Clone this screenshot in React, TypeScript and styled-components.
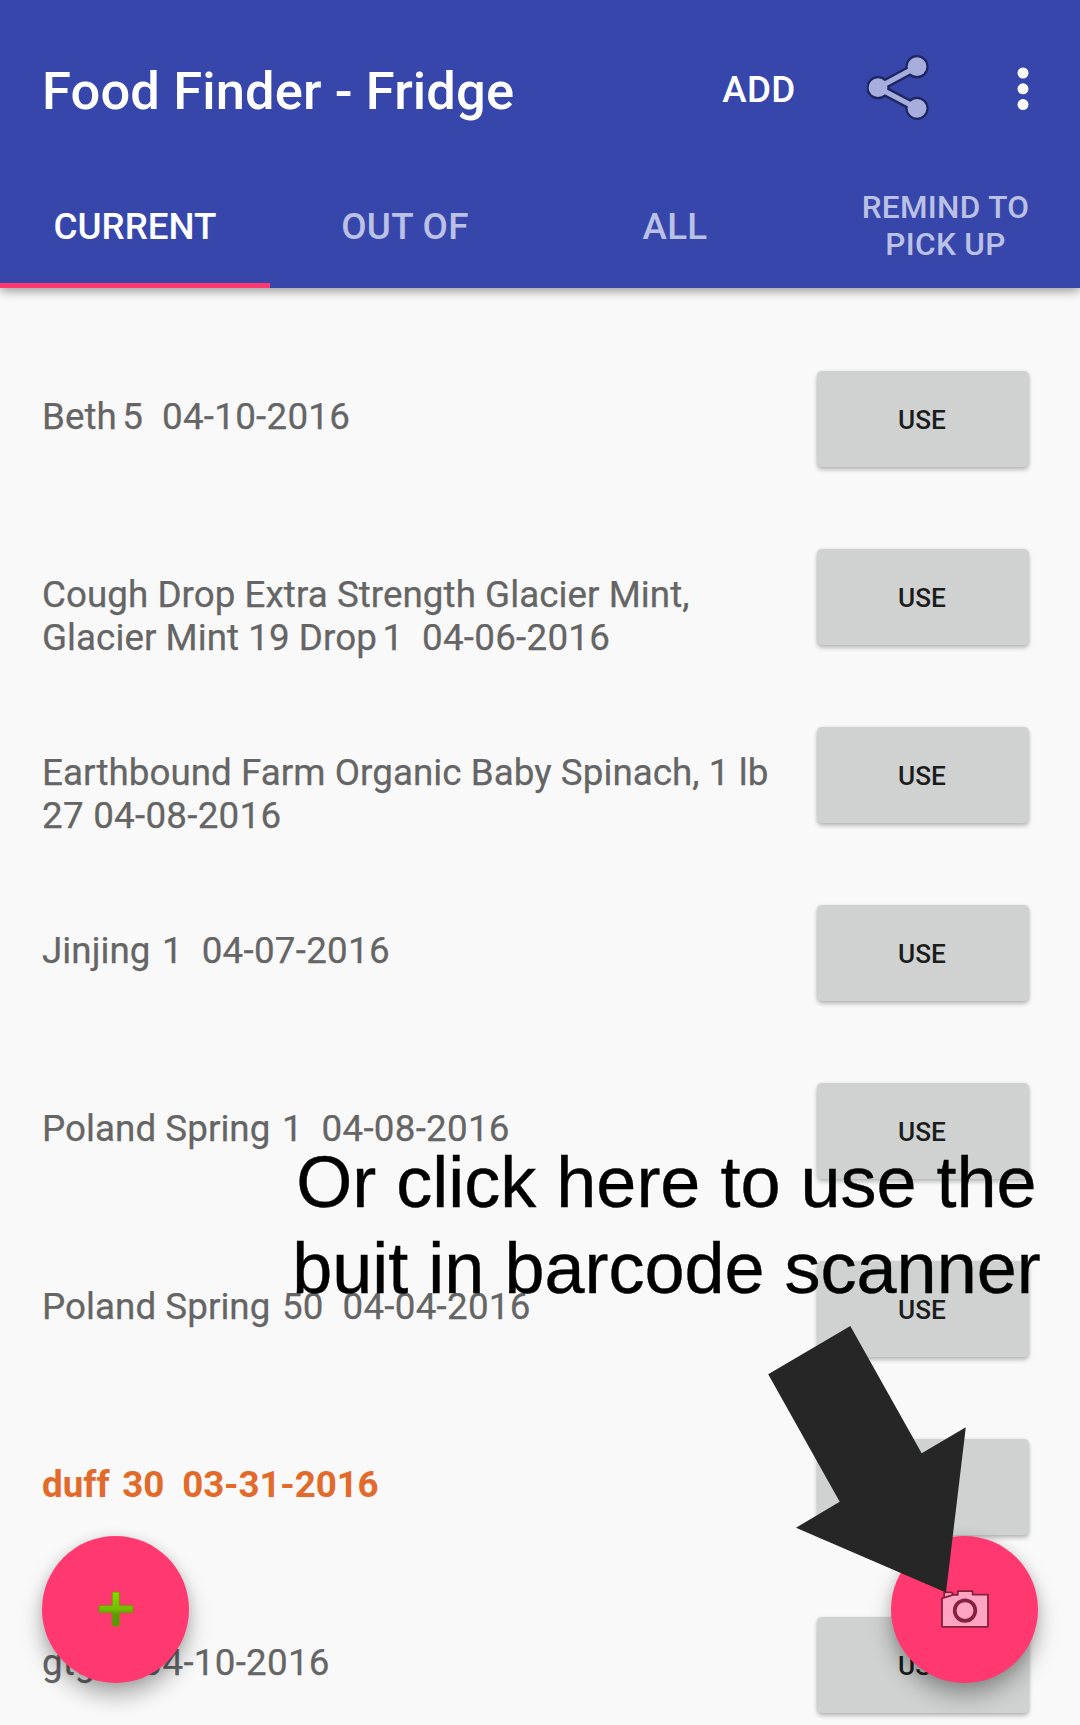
import React from "react";
import styled, { createGlobalStyle } from "styled-components";

const GlobalStyle = createGlobalStyle`
  *, *::before, *::after { box-sizing: border-box; }
  html, body { margin: 0; padding: 0; background: #f9f9f9; }
  body { font-family: Roboto, "Noto Sans", sans-serif; overflow: hidden; }
`;

const Screen = styled.div`
  position: relative;
  width: 1080px;
  height: 1725px;
  overflow: hidden;
  background: #f9f9f9;
`;

const AppBar = styled.header`
  position: relative;
  z-index: 1;
  height: 288px;
  background: #3746ab;
  color: #fff;
  box-shadow: 0 3px 10px rgba(0, 0, 0, 0.4);
`;

const Toolbar = styled.div`
  display: flex;
  align-items: center;
  height: 162px;
  padding: 18px 42px 0 42px;
`;

const Title = styled.h1`
  flex: 1;
  margin: 1px 0 0;
  font-size: 52.5px;
  line-height: 62px;
  font-weight: 500;
  letter-spacing: 0.11px;
`;

const TextAction = styled.button`
  border: 0;
  padding: 0;
  margin: 0 71px 0 0;
  background: none;
  color: inherit;
  font: 500 36.75px/44px Roboto, sans-serif;
  letter-spacing: 0.3px;
`;

const ShareIcon = styled.svg`
  width: 64px;
  height: 68px;
  margin: -6px 86px 0 0;
`;

const OverflowIcon = styled.svg`
  width: 12px;
  height: 44px;
  margin: -3px 9.5px 0 0;
`;

const TabRow = styled.nav`
  display: grid;
  grid-template-columns: repeat(4, 270px);
  height: 126px;
`;

const Tab = styled.button<{ $active?: boolean; $small?: boolean }>`
  display: flex;
  align-items: center;
  justify-content: center;
  border: 0;
  border-bottom: 5px solid ${(p) => (p.$active ? "#ff3870" : "transparent")};
  padding: ${(p) => (p.$small ? "7px 41px 0 42px" : "8px 24px 0")};
  background: none;
  color: ${(p) => (p.$active ? "#fff" : "#bbc1e4")};
  font-family: Roboto, sans-serif;
  font-weight: 500;
  font-size: ${(p) => (p.$small ? "31.5px" : "36.75px")};
  line-height: ${(p) => (p.$small ? "37px" : "44px")};
  letter-spacing: ${(p) => (p.$active ? "0" : "0.35px")};
  text-align: center;
`;

const List = styled.main`
  padding-top: 42px;
`;

const Row = styled.div`
  display: flex;
  align-items: flex-start;
  height: 178px;
  padding: 41px 51px 0 42px;
`;

const ItemText = styled.p<{ $expired?: boolean }>`
  flex: 1;
  margin: 24px 0 0;
  font-size: 36.75px;
  line-height: 43px;
  letter-spacing: 0.05px;
  white-space: pre;
  font-weight: ${(p) => (p.$expired ? 700 : 400)};
  color: ${(p) => (p.$expired ? "#e26a2a" : "#656565")};
  -webkit-text-stroke: ${(p) => (p.$expired ? "0" : "0.25px #656565")};
`;

const Detail = styled.span<{ $gap: number; $expired?: boolean }>`
  margin-left: ${(p) => p.$gap}px;
  letter-spacing: ${(p) => (p.$expired ? "-0.13px" : "0.26px")};
`;

const UseButton = styled.button`
  width: 212px;
  height: 96px;
  border: 0;
  border-radius: 5px;
  padding: 2px 2px 0 0;
  background: #d0d2d1;
  color: #1b1c1c;
  font: 500 26.25px/32px Roboto, sans-serif;
  box-shadow: 0 3px 4px rgba(0, 0, 0, 0.24), 0 0 3px rgba(0, 0, 0, 0.1);
`;

const Fab = styled.button<{ $side: "left" | "right" }>`
  position: absolute;
  top: 1536px;
  ${(p) => p.$side}: 42px;
  display: flex;
  align-items: center;
  justify-content: center;
  width: 147px;
  height: 147px;
  border: 0;
  border-radius: 50%;
  padding: 0 0 1px;
  background: #ff3870;
  box-shadow: 0 13px 22px rgba(0, 0, 0, 0.3), 0 1px 12px rgba(0, 0, 0, 0.1);
`;

const Callout = styled.p`
  position: absolute;
  top: 1139px;
  left: 266.5px;
  width: 800px;
  margin: 0;
  color: #000;
  text-align: center;
  font: 72px/86px "Liberation Sans", Arial, sans-serif;
  -webkit-text-stroke: 0.4px #000;
`;

const Arrow = styled.svg`
  position: absolute;
  left: 760px;
  top: 1320px;
  width: 220px;
  height: 280px;
`;

type Item = { name: string; detail: string; gap: number; expired?: boolean };

const items: Item[] = [
  { name: "Beth", detail: "5  04-10-2016", gap: 5.5 },
  {
    name: "Cough Drop Extra Strength Glacier Mint,\nGlacier Mint 19 Drop",
    detail: "1  04-06-2016",
    gap: 5.5,
  },
  {
    name: "Earthbound Farm Organic Baby Spinach, 1 lb\n",
    detail: "27 04-08-2016",
    gap: 0,
  },
  { name: "Jinjing", detail: "1  04-07-2016", gap: 11.5 },
  { name: "Poland Spring", detail: "1  04-08-2016", gap: 11.5 },
  { name: "Poland Spring", detail: "50  04-04-2016", gap: 11.5 },
  { name: "duff", detail: "30  03-31-2016", gap: 12.5, expired: true },
  { name: "gtg", detail: "1  04-10-2016", gap: 6.5 },
];

export default function App() {
  return (
    <Screen>
      <GlobalStyle />
      <AppBar>
        <Toolbar>
          <Title>Food Finder - Fridge</Title>
          <TextAction>ADD</TextAction>
          <ShareIcon viewBox="0 0 64 68">
            <g fill="#1d265d" stroke="#1d265d">
              <path d="M11 34.7L50 13.7M11 34.7L50 55.3" fill="none" strokeWidth="9.8" />
              <g stroke="none">
                <circle cx="11" cy="34.7" r="11.6" />
                <circle cx="50" cy="13.7" r="11.6" />
                <circle cx="50" cy="55.3" r="11.6" />
              </g>
            </g>
            <path d="M11 34.7L50 13.7M11 34.7L50 55.3" fill="none" stroke="#a7aedd" strokeWidth="5.2" />
            <g fill="#a7aedd">
              <circle cx="11" cy="34.7" r="9.4" />
              <circle cx="50" cy="13.7" r="9.4" />
              <circle cx="50" cy="55.3" r="9.4" />
            </g>
          </ShareIcon>
          <OverflowIcon viewBox="0 0 12 44" fill="#fff">
            <circle cx="6" cy="6" r="5.5" />
            <circle cx="6" cy="21.8" r="5.5" />
            <circle cx="6" cy="37.6" r="5.5" />
          </OverflowIcon>
        </Toolbar>
        <TabRow>
          <Tab $active>CURRENT</Tab>
          <Tab>OUT OF</Tab>
          <Tab>ALL</Tab>
          <Tab $small>
            REMIND TO
            <br />
            PICK UP
          </Tab>
        </TabRow>
      </AppBar>
      <List>
        {items.map((item, i) => (
          <Row key={i}>
            <ItemText $expired={item.expired}>
              {item.name}
              <Detail $gap={item.gap} $expired={item.expired}>
                {item.detail}
              </Detail>
            </ItemText>
            <UseButton>USE</UseButton>
          </Row>
        ))}
      </List>
      <Fab $side="left" aria-label="Add item">
        <svg width="36" height="36" viewBox="0 0 36 36">
          <defs>
            <linearGradient id="plus" x1="0" y1="0" x2="0" y2="1">
              <stop offset="0" stopColor="#86dc00" />
              <stop offset="0.5" stopColor="#72be00" />
              <stop offset="0.66" stopColor="#5c9c00" />
              <stop offset="1" stopColor="#5a9800" />
            </linearGradient>
          </defs>
          <path
            d="M14.2 1h7.2v13.4H35v7.2H21.4V35h-7.2V21.6H1v-7.2h13.2z"
            fill="url(#plus)"
            stroke="#7f8a14"
            strokeWidth="0.9"
            strokeLinejoin="round"
          />
        </svg>
      </Fab>
      <Fab $side="right" aria-label="Scan barcode">
        <svg width="48" height="38" viewBox="0 0 48 38">
          <g fill="#ffa4c2" stroke="#85203f" strokeWidth="1.8" strokeLinejoin="round">
            <path d="M3.2 8V2.4h7.6l1.2 1.6v1.2z" />
            <path d="M1 8.3L12 4.8h4.8V1.2h14.8v3.4H47v31.5q0 .8-.8.8H1.8q-.8 0-.8-.8z" />
          </g>
          <circle cx="24" cy="20.6" r="10.3" fill="#ffa4c2" stroke="#85203f" strokeWidth="3.7" />
        </svg>
      </Fab>
      <Callout>
        Or click here to use the
        <br />
        buit in barcode scanner
      </Callout>
      <Arrow viewBox="760 1320 220 280">
        <path
          d="M850.3 1326L768.2 1374.3L839.7 1501.7L796 1527.7L946 1592.5L965.8 1427.3L921.7 1453.2Z"
          fill="#262626"
        />
      </Arrow>
    </Screen>
  );
}
